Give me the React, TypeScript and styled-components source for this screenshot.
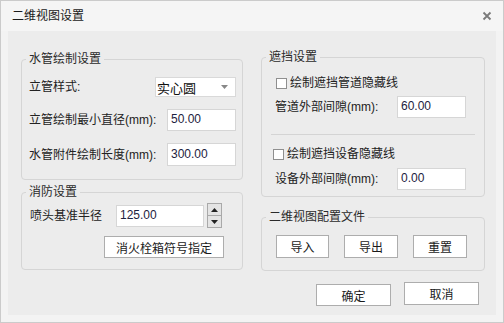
import React from 'react'
import styled, { createGlobalStyle } from 'styled-components'

const GlobalStyle = createGlobalStyle`
  html, body {
    margin: 0;
    padding: 0;
    background: #ffffff;
  }
  * {
    box-sizing: border-box;
  }
`

const FONT = `"Liberation Sans", "Noto Sans CJK SC", sans-serif`

function CloseIcon() {
  return (
    <svg width="10" height="10" viewBox="0 0 10 10">
      <path d="M1.5 1.5 L8.5 8.5 M8.5 1.5 L1.5 8.5" stroke="#7a7a7a" strokeWidth="1.8" />
    </svg>
  )
}

function Triangle({ up, color = '#222' }: { up?: boolean; color?: string }) {
  return (
    <svg width="7" height="4" viewBox="0 0 7 4">
      <path d={up ? 'M0 4 L3.5 0 L7 4 Z' : 'M0 0 L7 0 L3.5 4 Z'} fill={color} />
    </svg>
  )
}

export default function App() {
  return (
    <>
      <GlobalStyle />
      <Window>
        <TitleBar>
          <Title>二维视图设置</Title>
          <CloseButton>
            <CloseIcon />
          </CloseButton>
        </TitleBar>
        <Body>
          <LeftCol>
            <Group>
              <Legend>水管绘制设置</Legend>
              <Content $pad="11px 6px 13px 7px">
                <Row>
                  <Label>立管样式:</Label>
                  <Select>
                    <span>实心圆</span>
                    <Triangle color="#888" />
                  </Select>
                </Row>
                <Row $top={12}>
                  <Label>立管绘制最小直径(mm):</Label>
                  <Input $w={69} $h={22}>50.00</Input>
                </Row>
                <Row $top={12}>
                  <Label>水管附件绘制长度(mm):</Label>
                  <Input $w={69} $h={23}>300.00</Input>
                </Row>
              </Content>
            </Group>
            <Group $top={5}>
              <Legend>消防设置</Legend>
              <Content $pad="4px 18px 11px 8px">
                <Row>
                  <Label $w={86}>喷头基准半径</Label>
                  <Input $w={88} $h={22}>125.00</Input>
                  <Spinner>
                    <SpinButton>
                      <Triangle up />
                    </SpinButton>
                    <SpinButton>
                      <Triangle />
                    </SpinButton>
                  </Spinner>
                  <Spacer />
                </Row>
                <ButtonRow $top={8}>
                  <Button $w={120} $h={22}>消火栓箱符号指定</Button>
                </ButtonRow>
              </Content>
            </Group>
          </LeftCol>
          <RightCol>
            <Group>
              <Legend>遮挡设置</Legend>
              <Content $pad="12px 18px 6px 0">
                <CheckRow $indent={14}>
                  <CheckBox />
                  <span>绘制遮挡管道隐藏线</span>
                </CheckRow>
                <Row $top={6} $indent={13}>
                  <Label $w={122}>管道外部间隙(mm):</Label>
                  <Input $w={69} $h={22}>60.00</Input>
                  <Spacer />
                </Row>
                <Separator />
                <CheckRow $indent={11} $top={12}>
                  <CheckBox />
                  <span>绘制遮挡设备隐藏线</span>
                </CheckRow>
                <Row $top={7} $indent={13}>
                  <Label $w={122}>设备外部间隙(mm):</Label>
                  <Input $w={69} $h={22}>0.00</Input>
                  <Spacer />
                </Row>
              </Content>
            </Group>
            <Group $top={13}>
              <Legend>二维视图配置文件</Legend>
              <Content $pad="11px 0 12px 14px">
                <ButtonRow $start>
                  <Button $w={53} $h={23}>导入</Button>
                  <Button $w={54} $h={23}>导出</Button>
                  <Button $w={54} $h={23}>重置</Button>
                </ButtonRow>
              </Content>
            </Group>
            <Footer>
              <Button $w={75} $h={22} $top={2}>确定</Button>
              <Button $w={75} $h={23}>取消</Button>
            </Footer>
          </RightCol>
        </Body>
      </Window>
    </>
  )
}

const Window = styled.div`
  width: 504px;
  height: 323px;
  border: 1px solid #cbcbcb;
  background: #f3f3f3;
  display: flex;
  flex-direction: column;
  font-family: ${FONT};
  font-size: 12px;
  color: #1f1f1f;
`

const TitleBar = styled.div`
  height: 30px;
  display: flex;
  align-items: center;
  justify-content: space-between;
  padding: 0 11px 0 11px;
  background: #f5f5f5;
`

const Title = styled.div`
  font-size: 12px;
  color: #1a1a1a;
  line-height: 14px;
`

const CloseButton = styled.div`
  width: 10px;
  height: 10px;
  display: flex;
`

const Body = styled.div`
  flex: 1;
  margin: 0 7px 7px 7px;
  background: #ececec;
  display: flex;
  gap: 18px;
  padding: 19px 11px 0 13px;
`

const LeftCol = styled.div`
  width: 222px;
  padding-top: 2px;
  display: flex;
  flex-direction: column;
`

const RightCol = styled.div`
  width: 224px;
  display: flex;
  flex-direction: column;
`

const Group = styled.fieldset<{ $top?: number }>`
  margin: ${(p) => p.$top || 0}px 0 0 0;
  padding: 0;
  border: 1px solid #d5d5d5;
  border-radius: 4px;
  min-width: 0;
`

const Legend = styled.legend`
  margin-left: 4px;
  padding: 0 3px;
  line-height: 14px;
  font-size: 12px;
  color: #2a2a2a;
`

const Content = styled.div<{ $pad: string }>`
  padding: ${(p) => p.$pad};
  display: flex;
  flex-direction: column;
`

const Row = styled.div<{ $top?: number; $indent?: number }>`
  display: flex;
  align-items: center;
  justify-content: space-between;
  margin-top: ${(p) => p.$top || 0}px;
  padding-left: ${(p) => p.$indent || 0}px;
`

const Spacer = styled.div`
  flex: 1;
`

const Label = styled.div<{ $w?: number }>`
  line-height: 14px;
  white-space: nowrap;
  color: #222;
  ${(p) => (p.$w ? `width: ${p.$w}px; flex: none;` : '')}
`

const Select = styled.div`
  width: 81px;
  height: 20px;
  background: #ffffff;
  border: 1px solid #d9d9d9;
  display: flex;
  align-items: center;
  justify-content: space-between;
  padding: 0 7px 0 1px;
  font-size: 13px;
  color: #111;
`

const Input = styled.div<{ $w: number; $h: number }>`
  width: ${(p) => p.$w}px;
  height: ${(p) => p.$h}px;
  flex: none;
  background: #ffffff;
  border: 1px solid #d6d6d6;
  display: flex;
  align-items: center;
  padding: 0 3px 2px;
  font-size: 12px;
  color: #1d2240;
`

const Spinner = styled.div`
  width: 15px;
  height: 25px;
  margin-left: 3px;
  display: flex;
  flex-direction: column;
  border: 1px solid #a9a9a9;
  flex: none;
`

const SpinButton = styled.div`
  flex: 1;
  display: flex;
  align-items: center;
  justify-content: center;
  background: #e4e4e4;
  & + & {
    border-top: 1px solid #a9a9a9;
  }
`

const ButtonRow = styled.div<{ $top?: number; $start?: boolean }>`
  display: flex;
  justify-content: ${(p) => (p.$start ? 'flex-start' : 'flex-end')};
  gap: 15px;
  margin-top: ${(p) => p.$top || 0}px;
`

const Button = styled.div<{ $w: number; $h: number; $top?: number }>`
  width: ${(p) => p.$w}px;
  height: ${(p) => p.$h}px;
  margin-top: ${(p) => p.$top || 0}px;
  background: #ffffff;
  border: 1px solid #adadad;
  display: flex;
  align-items: center;
  justify-content: center;
  font-size: 12px;
  color: #1a1a1a;
`

const CheckRow = styled.div<{ $indent: number; $top?: number }>`
  display: flex;
  align-items: center;
  height: 14px;
  gap: 3px;
  padding-left: ${(p) => p.$indent}px;
  margin-top: ${(p) => p.$top || 0}px;
  line-height: 14px;
  color: #222;
`

const CheckBox = styled.div`
  width: 11px;
  height: 11px;
  border: 1px solid #8f8f8f;
  background: #ffffff;
  flex: none;
`

const Separator = styled.div`
  height: 1px;
  background: #d4d4d4;
  margin: 16px -9px 0 9px;
`

const Footer = styled.div`
  display: flex;
  justify-content: flex-end;
  align-items: flex-start;
  gap: 13px;
  margin-top: 11px;
  padding-right: 6px;
`
